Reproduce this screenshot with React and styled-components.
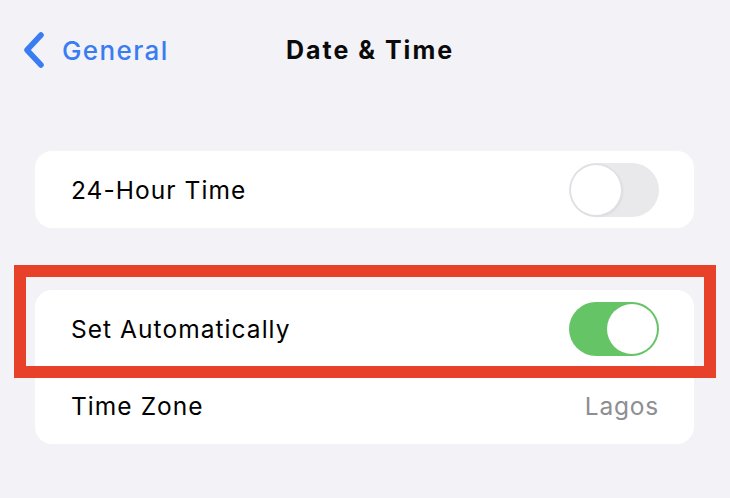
import React from "react";
import styled, { createGlobalStyle } from "styled-components";

const Global = createGlobalStyle`
  html, body { margin: 0; padding: 0; background: #f2f2f7; }
  body { font-family: Inter, "Open Sans", "Liberation Sans", sans-serif; -webkit-font-smoothing: antialiased; }
`;

const Page = styled.div`
  width: 730px;
  height: 498px;
  background: #f2f2f7;
  display: flex;
  flex-direction: column;
  overflow: hidden;
`;

const NavBar = styled.div`
  height: 100px;
  display: grid;
  grid-template-columns: 1fr auto 1fr;
  align-items: center;
  padding: 0 23px;
  box-sizing: border-box;
`;

const Back = styled.div`
  display: flex;
  align-items: center;
  gap: 17px;
  color: #3a7cf2;
  font-size: 26px;
  letter-spacing: 1.4px;
  font-weight: 500;
`;

const Title = styled.div`
  font-size: 25px;
  font-weight: 700;
  letter-spacing: 2px;
  color: #0a0a0a;
  margin-left: 10px;
`;

const Content = styled.div`
  padding: 51px 36px 0 35px;
  display: flex;
  flex-direction: column;
  gap: 62px;
`;

const Group = styled.div`
  position: relative;
  background: #fff;
  border-radius: 17px;
  display: flex;
  flex-direction: column;
`;

const Row = styled.div`
  height: 77px;
  display: flex;
  align-items: center;
  justify-content: space-between;
  padding: 0 35px 0 36px;
`;

const Label = styled.span`
  font-size: 24.5px;
  letter-spacing: 1.05px;
  color: #000;
`;

const Value = styled.span`
  font-size: 24.5px;
  letter-spacing: 0.8px;
  color: #8e8e93;
`;

const Track = styled.div`
  width: 90px;
  height: 54px;
  border-radius: 27px;
  box-sizing: border-box;
  padding: 2px;
  background: ${(p) => (p.$on ? "#65c466" : "#e9e9eb")};
  display: flex;
  justify-content: ${(p) => (p.$on ? "flex-end" : "flex-start")};
`;

const Knob = styled.div`
  width: 50px;
  height: 50px;
  border-radius: 50%;
  background: #fff;
  box-shadow: ${(p) =>
    p.$on ? "none" : "0 0 0 1.5px #dde0e4, 1px 1px 3px rgba(0,0,0,0.12)"};
`;

const Highlight = styled.div`
  position: absolute;
  top: -25px;
  left: -21px;
  right: -22px;
  height: 113px;
  box-sizing: border-box;
  border: 12px solid #e8412a;
  pointer-events: none;
`;

function Toggle({ on }) {
  return (
    <Track $on={on}>
      <Knob $on={on} />
    </Track>
  );
}

export default function App() {
  return (
    <Page>
      <Global />
      <NavBar>
        <Back>
          <svg width="22" height="36" viewBox="0 0 22 36">
            <path
              d="M18 3 L4 18 L18 33"
              fill="none"
              stroke="#3a7cf2"
              strokeWidth="5.5"
              strokeLinecap="round"
              strokeLinejoin="round"
            />
          </svg>
          <span>General</span>
        </Back>
        <Title>Date &amp; Time</Title>
        <div />
      </NavBar>
      <Content>
        <Group>
          <Row>
            <Label>24-Hour Time</Label>
            <Toggle on={false} />
          </Row>
        </Group>
        <Group>
          <Highlight />
          <Row>
            <Label>Set Automatically</Label>
            <Toggle on />
          </Row>
          <Row>
            <Label>Time Zone</Label>
            <Value>Lagos</Value>
          </Row>
        </Group>
      </Content>
    </Page>
  );
}
